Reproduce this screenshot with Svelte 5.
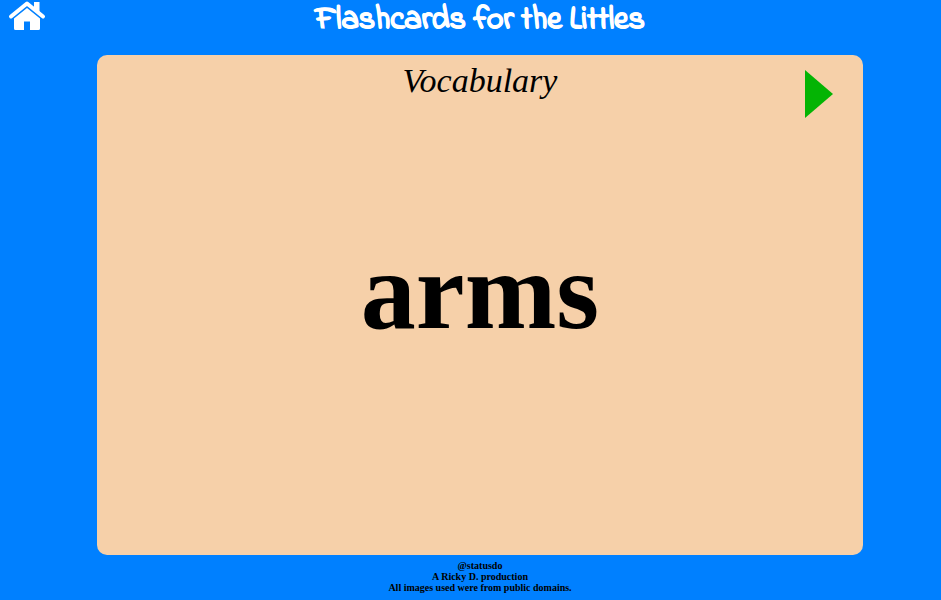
<script>
  const words = ['arms', 'legs', 'hands', 'feet'];
  let index = $state(0);

  function next() {
    index = (index + 1) % words.length;
  }
</script>

<div class="page">
  <header>
    <a class="home" href="#home" aria-label="Home">
      <svg viewBox="0 0 36 30" aria-hidden="true">
        <path class="roof" d="M2 15.500 L18 2.500 L34 15.500" />
        <path d="M25 1h5.500v12l-5.500-5z" />
        <path d="M18 7 31 17.500V27.500Q31 29 29.500 29H21V20.500H15V29H6.500Q5 29 5 27.500V17.500Z" />
      </svg>
    </a>
    <h1>Flashcards for the Littles</h1>
  </header>

  <main>
    <h2>Vocabulary</h2>
    <button class="next" type="button" aria-label="Next card" onclick={next}></button>
    <p class="word">{words[index]}</p>
  </main>

  <footer>
    <p>@statusdo</p>
    <p>A Ricky D. production</p>
    <p>All images used were from public domains.</p>
  </footer>
</div>

<style>
  :global(body) {
    margin: 0;
    background: #0080ff;
  }

  .page {
    box-sizing: border-box;
    min-height: 100vh;
    padding-left: 19px;
    display: flex;
    flex-direction: column;
    font-family: "Liberation Serif", "Times New Roman", serif;
    color: #000;
  }

  h1,
  h2,
  p {
    margin: 0;
  }

  header {
    height: 55px;
    text-align: center;
  }

  .home {
    position: absolute;
    top: 1px;
    left: 9px;
  }

  .home svg {
    display: block;
    width: 36px;
    height: 30px;
    overflow: visible;
    fill: #fff;
  }

  .home .roof {
    fill: none;
    stroke: #fff;
    stroke-width: 4;
    stroke-linecap: round;
    stroke-linejoin: round;
  }

  h1 {
    font: 700 32px/42px "Indie Flower", "Open Sans", cursive;
    color: #fff;
    -webkit-text-stroke: 1px #fff;
  }

  main {
    position: relative;
    flex: 1;
    min-height: 400px;
    margin: 0 78px;
    display: flex;
    flex-direction: column;
    border-radius: 10px;
    background: #f6d0a9;
  }

  h2 {
    font: italic 400 34px/52px "Apple Chancery", "Z003", "URW Chancery L", "Liberation Serif", cursive;
    text-align: center;
  }

  .next {
    position: absolute;
    top: 15px;
    right: 30px;
    width: 28px;
    height: 48px;
    padding: 0;
    border: 0;
    background: #04b404;
    clip-path: polygon(0 0, 100% 50%, 0 100%);
    cursor: pointer;
  }

  .word {
    flex: 1;
    padding-bottom: 80px;
    display: flex;
    align-items: center;
    justify-content: center;
    font-size: 110px;
    line-height: 128px;
    font-weight: 700;
  }

  footer {
    padding: 5px 0 7px;
    font-size: 10px;
    line-height: 11px;
    font-weight: 700;
    text-align: center;
  }
</style>
